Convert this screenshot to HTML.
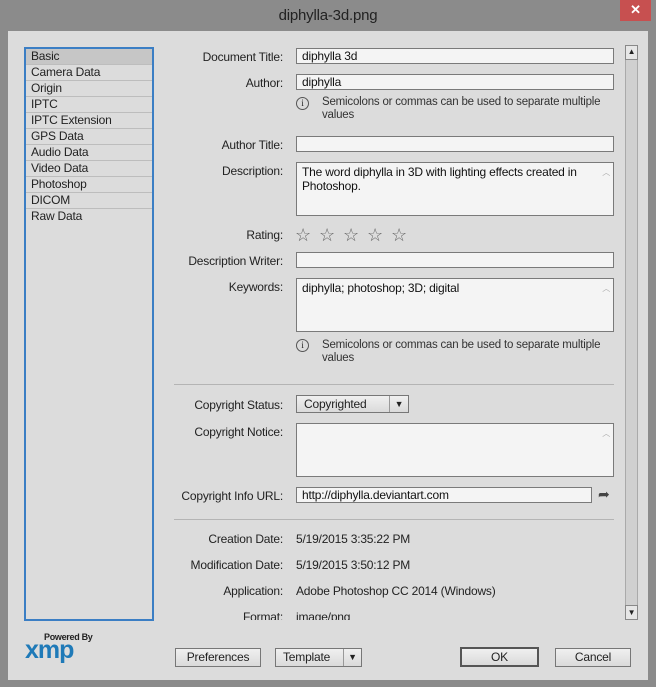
<!DOCTYPE html><html><head><style>
body{margin:0;width:656px;height:687px;background:#8b8b8b;font-family:"Liberation Sans",sans-serif;font-size:12px;letter-spacing:-0.2px;color:#222;position:relative;overflow:hidden}
.a{position:absolute}
.lbl{position:absolute;right:373px;text-align:right;white-space:nowrap}
.f{position:absolute;left:296px;width:318px;background:#f4f4f4;border:1px solid #7a7a7a;height:16px;box-sizing:border-box;padding:0 5px;line-height:14px;color:#111}
.ta{height:54px;line-height:14px;padding:2px 5px}
.sb{position:absolute;right:3px;top:3px;color:#aaa;font-size:8px}
.li{position:absolute;left:26px;width:126px;height:16px;border-bottom:1px solid #bdbdbd;padding-left:5px;box-sizing:border-box;line-height:15px}
.btn{position:absolute;top:648px;height:19px;box-sizing:border-box;border:1px solid #777;background:linear-gradient(#f0f0f0,#dadada);text-align:center;line-height:17px}
.info{position:absolute;left:296px;width:13px;height:13px;border:1px solid #555;border-radius:50%;box-sizing:border-box;font-size:9px;text-align:center;line-height:11px;font-family:"Liberation Serif",serif}
.note{position:absolute;left:322px;width:290px;line-height:13px;color:#333;font-size:11.5px}
.star{position:absolute;top:225px;font-size:18px;color:#666}
</style></head><body>
<div class="a" style="left:0;top:0;width:656px;height:30px;text-align:center;line-height:32px;font-size:15px;color:#222">diphylla-3d.png</div>
<div class="a" style="left:620px;top:0;width:31px;height:21px;background:#c75050;color:#fff;text-align:center;line-height:20px;font-size:13px;font-weight:bold">✕</div>
<div class="a" style="left:8px;top:31px;width:640px;height:649px;background:#dcdcdc"></div>
<div class="a" style="left:24px;top:47px;width:126px;height:570px;border:2px solid #3b7ec4;background:#dcdcdc"></div>
<div class="li" style="top:49px;background:#c6c6c6">Basic</div>
<div class="li" style="top:65px">Camera Data</div>
<div class="li" style="top:81px">Origin</div>
<div class="li" style="top:97px">IPTC</div>
<div class="li" style="top:113px">IPTC Extension</div>
<div class="li" style="top:129px">GPS Data</div>
<div class="li" style="top:145px">Audio Data</div>
<div class="li" style="top:161px">Video Data</div>
<div class="li" style="top:177px">Photoshop</div>
<div class="li" style="top:193px">DICOM</div>
<div class="li" style="top:209px;border-bottom:none">Raw Data</div>

<div class="lbl" style="top:50px">Document Title:</div><div class="f" style="top:48px">diphylla 3d</div>
<div class="lbl" style="top:76px">Author:</div><div class="f" style="top:74px">diphylla</div>
<div class="info" style="top:97px">i</div><div class="note" style="top:96px">Semicolons or commas can be used to separate multiple<br>values</div>
<div class="lbl" style="top:138px">Author Title:</div><div class="f" style="top:136px"></div>
<div class="lbl" style="top:164px">Description:</div><div class="f ta" style="top:162px">The word diphylla in 3D with lighting effects created in Photoshop.<span class="sb">︿</span></div>
<div class="lbl" style="top:228px">Rating:</div>
<div class="star" style="left:295px">☆</div><div class="star" style="left:319px">☆</div><div class="star" style="left:343px">☆</div><div class="star" style="left:367px">☆</div><div class="star" style="left:391px">☆</div>
<div class="lbl" style="top:254px">Description Writer:</div><div class="f" style="top:252px"></div>
<div class="lbl" style="top:280px">Keywords:</div><div class="f ta" style="top:278px">diphylla; photoshop; 3D; digital<span class="sb">︿</span></div>
<div class="info" style="top:339px">i</div><div class="note" style="top:339px">Semicolons or commas can be used to separate multiple<br>values</div>
<div class="a" style="left:174px;top:384px;width:440px;height:1px;background:#b4b4b4"></div>
<div class="lbl" style="top:398px">Copyright Status:</div>
<div class="a" style="left:296px;top:395px;width:113px;height:18px;box-sizing:border-box;border:1px solid #777;background:linear-gradient(#f0f0f0,#dadada);line-height:16px;padding-left:7px">Copyrighted<span style="position:absolute;right:0;top:0;width:18px;border-left:1px solid #999;text-align:center;font-size:9px">▼</span></div>
<div class="lbl" style="top:425px">Copyright Notice:</div><div class="f ta" style="top:423px"><span class="sb">︿</span></div>
<div class="lbl" style="top:489px">Copyright Info URL:</div><div class="f" style="top:487px;width:296px">http://diphylla.deviantart.com</div>
<div class="a" style="left:598px;top:486px;font-size:14px;color:#444">➦</div>
<div class="a" style="left:174px;top:519px;width:440px;height:1px;background:#b4b4b4"></div>
<div class="lbl" style="top:532px">Creation Date:</div><div class="a" style="left:296px;top:532px">5/19/2015 3:35:22 PM</div>
<div class="lbl" style="top:558px">Modification Date:</div><div class="a" style="left:296px;top:558px">5/19/2015 3:50:12 PM</div>
<div class="lbl" style="top:584px">Application:</div><div class="a" style="left:296px;top:584px">Adobe Photoshop CC 2014 (Windows)</div>
<div class="a" style="left:170px;top:607px;width:450px;height:13px;overflow:hidden"><div class="lbl" style="top:3px;right:337px">Format:</div><div class="a" style="left:126px;top:3px">image/png</div></div>
<div class="a" style="left:625px;top:45px;width:13px;height:575px;background:#d0d0d0;border:1px solid #aaa;box-sizing:border-box"></div>
<div class="a" style="left:625px;top:45px;width:13px;height:15px;background:#e6e6e6;border:1px solid #888;box-sizing:border-box;font-size:8px;text-align:center;line-height:12px">▲</div>
<div class="a" style="left:625px;top:605px;width:13px;height:15px;background:#e6e6e6;border:1px solid #888;box-sizing:border-box;font-size:8px;text-align:center;line-height:13px">▼</div>
<div class="a" style="left:44px;top:632px;font-size:9px;font-weight:bold;color:#222;letter-spacing:-0.3px">Powered By</div>
<div class="a" style="left:25px;top:636px;font-size:25px;font-weight:bold;color:#1f7ab8;letter-spacing:-1px">xmp</div>
<div class="btn" style="left:175px;width:86px">Preferences</div>
<div class="btn" style="left:275px;width:87px;text-align:left;padding-left:7px">Template<span style="position:absolute;right:0;top:0;width:17px;border-left:1px solid #999;text-align:center;font-size:9px">▼</span></div>
<div class="btn" style="left:460px;width:79px;border:2px solid #555;height:20px;top:647px">OK</div>
<div class="btn" style="left:555px;width:76px">Cancel</div>
</body></html>
